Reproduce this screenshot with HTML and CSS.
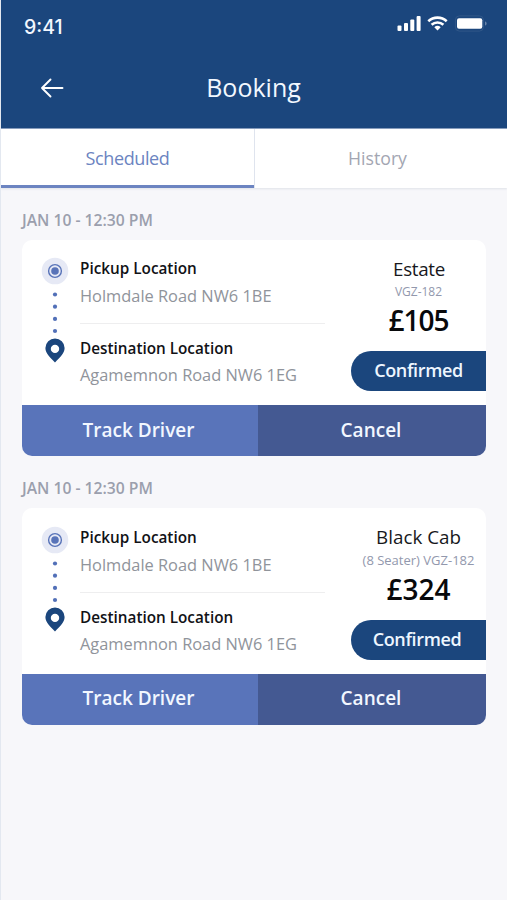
FILE: index.html
```html
<!DOCTYPE html>
<html lang="en">
<head>
<meta charset="utf-8">
<title>Booking</title>
<link rel="stylesheet" href="styles.css">
</head>
<body>
<svg class="sprite" aria-hidden="true">
  <symbol id="route" viewBox="0 0 28 108">
    <circle cx="14" cy="14" r="13.3" fill="#e6e9f5"/>
    <circle cx="14" cy="14" r="6.4" fill="none" stroke="#5873b8" stroke-width="1.4"/>
    <circle cx="14" cy="14" r="3.8" fill="#5873b8"/>
    <g fill="#5270b8">
      <circle cx="14" cy="37.500" r="2.1"/><circle cx="14" cy="49.700" r="2.1"/>
      <circle cx="14" cy="61.900" r="2.1"/><circle cx="14" cy="74" r="2.1"/>
    </g>
    <path fill="#1b467d" fill-rule="evenodd" d="M14 81.500a9.6 9.6 0 0 0-9.6 9.6c0 5.400 4.500 9.200 9.600 14.300 5.100-5.100 9.600-8.900 9.600-14.300A9.600 9.600 0 0 0 14 81.500zM14 87.700a4.200 4.200 0 1 1 0 8.400 4.200 4.200 0 0 1 0-8.400z"/>
  </symbol>
</svg>
<header class="header">
  <div class="status">
    <span class="clock">9:41</span>
    <svg class="status-icons" width="92" height="18" viewBox="0 0 92 18" fill="#fff">
      <rect x=".5" y="10.500" width="4" height="5.500" rx="1"/>
      <rect x="7" y="8" width="4" height="8" rx="1"/>
      <rect x="13.300" y="4.500" width="4" height="11.500" rx="1"/>
      <rect x="19.600" y="1" width="4" height="15" rx="1"/>
      <g fill="none" stroke="#fff" stroke-width="2.600">
        <path d="M31.300 6.200a13.600 13.600 0 0 1 18.400 0"/>
        <path d="M34.600 9.800a8.700 8.700 0 0 1 11.800 0"/>
      </g>
      <path d="M40.500 15.600l-3.200-3.300a4.800 4.800 0 0 1 6.400 0z"/>
      <rect x="58.400" y=".9" width="28" height="15.200" rx="4" fill="none" stroke="#365c8c" stroke-width=".8"/>
      <rect x="60" y="3.300" width="25.300" height="10.500" rx="2"/>
      <path d="M88 6.500c2.200.800 2.200 3.200 0 4z" fill="#6883a9"/>
    </svg>
  </div>
  <div class="titlebar">
    <svg class="back" width="24" height="20" viewBox="0 0 24 20" fill="none" stroke="#fff" stroke-width="1.900" stroke-linecap="round" stroke-linejoin="round"><path d="M22.500 10H2M10.500 1.500L2 10l8.500 8.500"/></svg>
    <h1 class="title">Booking</h1>
  </div>
</header>
<nav class="tabs">
  <a class="tab tab-active">Scheduled</a>
  <a class="tab">History</a>
</nav>
<main class="list">
  <h2 class="date">JAN 10 - 12:30 PM</h2>
  <article class="card">
    <div class="body">
      <svg class="route" width="28" height="108"><use href="#route"/></svg>
      <div class="stops">
        <div class="stop"><b class="name">Pickup Location</b><span class="addr">Holmdale Road NW6 1BE</span></div>
        <div class="stop stop-dest"><b class="name">Destination Location</b><span class="addr addr-dest">Agamemnon Road NW6 1EG</span></div>
      </div>
      <div class="ride">
        <span class="car car-short">Estate</span>
        <span class="plate">VGZ-182</span>
        <strong class="price price-tight">£105</strong>
        <span class="badge">Confirmed</span>
      </div>
    </div>
    <div class="actions"><a class="track">Track Driver</a><a class="cancel">Cancel</a></div>
  </article>
  <h2 class="date">JAN 10 - 12:30 PM</h2>
  <article class="card card-tall">
    <div class="body">
      <svg class="route" width="28" height="108"><use href="#route"/></svg>
      <div class="stops">
        <div class="stop"><b class="name">Pickup Location</b><span class="addr">Holmdale Road NW6 1BE</span></div>
        <div class="stop stop-dest"><b class="name">Destination Location</b><span class="addr addr-dest">Agamemnon Road NW6 1EG</span></div>
      </div>
      <div class="ride">
        <span class="car">Black Cab</span>
        <span class="plate plate-long">(8 Seater) VGZ-182</span>
        <strong class="price">£324</strong>
        <span class="badge badge-left">Confirmed</span>
      </div>
    </div>
    <div class="actions"><a class="track">Track Driver</a><a class="cancel">Cancel</a></div>
  </article>
</main>
</body>
</html>
```
FILE: styles.css
```css
* { box-sizing: border-box; }
body { margin: 0; height: 900px; overflow: hidden; background: #f7f7fa; border-left: 1px solid #e3e8f0; font-family: "Open Sans", "Noto Sans", sans-serif; white-space: nowrap; }
h1, h2 { margin: 0; }
.sprite { position: absolute; width: 0; height: 0; }
.header { height: 129px; background: #1b467d; border-bottom: 1px solid #8097b8; }
.status { height: 52px; padding: 0 18px 0 23px; display: flex; justify-content: space-between; }
.clock { font: 500 19.5px/54px Inter, sans-serif; color: #f2f7ff; }
.status-icons { margin-top: 15px; }
.titlebar { display: grid; grid-template-columns: 1fr auto 1fr; align-items: center; height: 72px; padding-left: 39px; padding-right: 40px; }
.title { font-size: 25px; line-height: 70px; padding-bottom: 2px; font-weight: 400; color: #f2f8ff; }
.tabs { display: grid; grid-template-columns: 253px 1fr; height: 59px; background: #fff; box-shadow: 0 1px 2px #dfe2e8; }
.tab { text-align: center; font-size: 17.7px; line-height: 59px; color: #a3a6b2; border-left: 1px solid #dfe4ee; padding-right: 7px; }
.tab-active { color: #6c84c1; border-left: 0; box-shadow: inset 0 -3px #6c84c1; padding: 0; letter-spacing: -.4px; font-size: 18px; }
.list { padding: 0 21px; }
.date { height: 52px; font-size: 15.7px; line-height: 64px; font-weight: 600; color: #9b9fad; }
.card { height: 216px; border-radius: 10px; background: #fff; overflow: hidden; }
.body { display: flex; height: 165px; }
.route { margin: 17px 0 0 19px; flex: none; }
.stops { width: 245px; margin-left: 11px; padding-top: 17px; flex: none; }
.stop { display: flex; flex-direction: column; height: 66px; }
.stop-dest { border-top: 1px solid #eeeeef; padding-top: 13px; }
.name { font-size: 15.3px; line-height: 22px; font-weight: 600; color: #111216; }
.addr { font-size: 16.4px; line-height: 22px; margin-top: 6px; color: #90949b; }
.addr-dest { margin-top: 5px; }
.ride { width: 135px; margin-left: 26px; display: flex; flex-direction: column; text-align: center; flex: none; padding-top: 16px; }
.car { font-size: 18.8px; line-height: 26px; color: #17181c; }
.car-short { letter-spacing: -.3px; padding-left: 1px; }
.plate { font-size: 12px; line-height: 20px; color: #9298ad; }
.plate-long { font-size: 13px; }
.price { font-size: 28px; line-height: 38px; font-weight: 600; color: #08090b; }
.price-tight { letter-spacing: -1px; line-height: 36px; padding-bottom: 2px; }
.badge { height: 40px; margin-top: 11px; border-radius: 20px 0 0 20px; background: #1b467d; color: #eef6ff; font-size: 18px; line-height: 39px; font-weight: 600; letter-spacing: -.35px; }
.badge-left { margin-top: 12px; padding-right: 3px; line-height: 38px; }
.actions { display: grid; grid-template-columns: 236px 1fr; height: 51px; font-size: 19px; line-height: 51px; font-weight: 600; color: #f2f7ff; text-align: center; }
.track { background: #5974ba; padding-right: 3px; }
.cancel { background: #445992; padding-right: 2px; }
.card-tall { height: 217px; }
.card-tall .body { height: 166px; }
.card-tall .route { margin-top: 18px; }
.card-tall .stops { padding-top: 18px; }
.card-tall .actions { line-height: 49px; }
```
